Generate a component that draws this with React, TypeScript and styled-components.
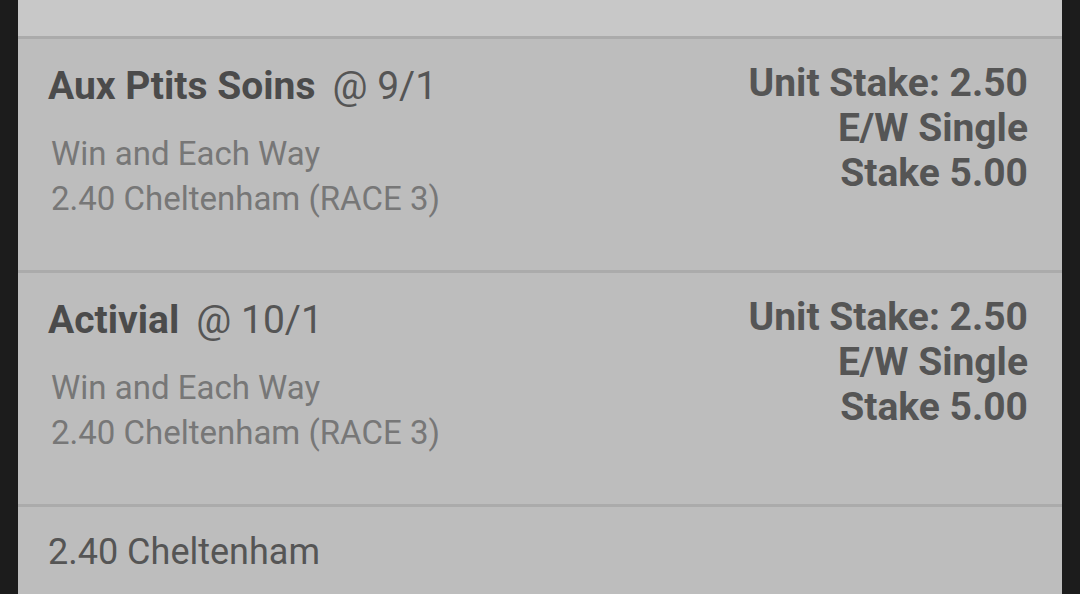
import React from "react";
import styled, { createGlobalStyle } from "styled-components";

const Global = createGlobalStyle`
  html, body { margin: 0; padding: 0; background: #1c1c1c; }
  body { font-family: Roboto, "Noto Sans", sans-serif; overflow: hidden; }
`;

const Screen = styled.div`
  width: 1080px;
  height: 594px;
  background: #1c1c1c;
  display: flex;
  justify-content: flex-start;
  padding-left: 18px;
  box-sizing: border-box;
  overflow: hidden;
`;

const Panel = styled.div`
  width: 1044px;
  background: #bdbdbd;
  display: flex;
  flex-direction: column;
`;

const TopStrip = styled.div`
  height: 36px;
  background: #c8c8c8;
  border-bottom: 3px solid #ababab;
  flex-shrink: 0;
`;

const BetRow = styled.div`
  height: 234px;
  flex-shrink: 0;
  border-bottom: 3px solid #ababab;
  display: flex;
  justify-content: space-between;
  padding: 21px 34px 0 30px;
  box-sizing: border-box;
`;

const Left = styled.div`
  display: flex;
  flex-direction: column;
`;

const Title = styled.div`
  font-size: 39px;
  line-height: 52px;
  color: #4b4b4b;
  white-space: nowrap;
`;

const Name = styled.span`
  font-weight: 700;
  margin-right: 17px;
`;

const Odds = styled.span`
  font-weight: 400;
  color: #555;
`;

const Sub = styled.div`
  margin-top: 19px;
  padding-left: 3px;
  font-size: 33px;
  line-height: 45px;
  color: #777;
  white-space: nowrap;
`;

const Right = styled.div`
  text-align: right;
  font-weight: 700;
  font-size: 39px;
  line-height: 45px;
  color: #555;
  padding-top: 1px;
`;

const Footer = styled.div`
  padding: 13px 30px;
  font-size: 36px;
  line-height: 64px;
  color: #555;
`;

const bets = [
  { name: "Aux Ptits Soins", odds: "9/1" },
  { name: "Activial", odds: "10/1" },
];

export default function App() {
  return (
    <>
      <Global />
      <Screen>
        <Panel>
          <TopStrip />
          {bets.map((b) => (
            <BetRow key={b.name}>
              <Left>
                <Title>
                  <Name>{b.name}</Name>
                  <Odds>@ {b.odds}</Odds>
                </Title>
                <Sub>
                  Win and Each Way
                  <br />
                  2.40 Cheltenham (RACE 3)
                </Sub>
              </Left>
              <Right>
                Unit Stake: 2.50
                <br />
                E/W Single
                <br />
                Stake 5.00
              </Right>
            </BetRow>
          ))}
          <Footer>2.40 Cheltenham</Footer>
        </Panel>
      </Screen>
    </>
  );
}
